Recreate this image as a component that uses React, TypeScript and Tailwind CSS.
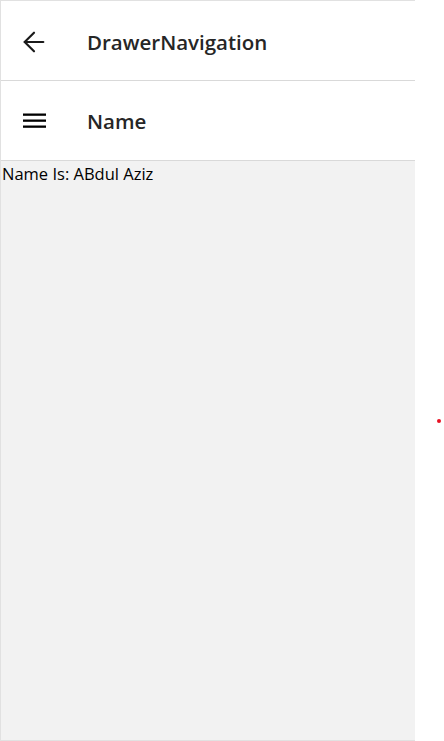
import { ArrowLeft } from 'lucide-react';

export default function App() {
  return (
    <div className="relative h-[741px] w-[444px] bg-white overflow-hidden" style={{ fontFamily: '"Open Sans", "Noto Sans", sans-serif' }}>
      <div className="flex h-full w-[415px] flex-col border-t border-b border-l border-[#e1e1e1]">
        {/* Top bar */}
        <div className="flex h-[80px] shrink-0 items-center border-b border-[#d9d9d9]">
          <div className="flex w-[86px] justify-start pl-[17px] pt-[2px]">
            <ArrowLeft className="h-8 w-8 text-[#1a1a1a]" strokeWidth={1.6} />
          </div>
          <span className="pt-[3px] text-[20.5px] font-semibold text-[#262626]">DrawerNavigation</span>
        </div>

        {/* Drawer screen header */}
        <div className="flex h-[80px] shrink-0 items-center border-b border-[#d9d9d9]">
          <div className="flex w-[86px] justify-start pl-[22px]">
            <svg width="23" height="16" viewBox="0 0 23 16" className="text-black">
              <rect x="0" y="0.5" width="23" height="2.3" fill="currentColor" />
              <rect x="0" y="6.5" width="23" height="2.3" fill="currentColor" />
              <rect x="0" y="12.5" width="23" height="2.3" fill="currentColor" />
            </svg>
          </div>
          <span className="pt-[1px] text-[20.5px] font-semibold text-[#262626]">Name</span>
        </div>

        {/* Content */}
        <div className="flex-1 bg-[#f2f2f2] pl-px">
          <p className="text-[16.5px] leading-[26px] text-black">Name Is: ABdul Aziz</p>
        </div>
      </div>

      {/* red dot */}
      <div className="absolute left-[437px] top-[419px] h-[4px] w-[4px] rounded-full bg-[#e81123]" />
    </div>
  );
}
